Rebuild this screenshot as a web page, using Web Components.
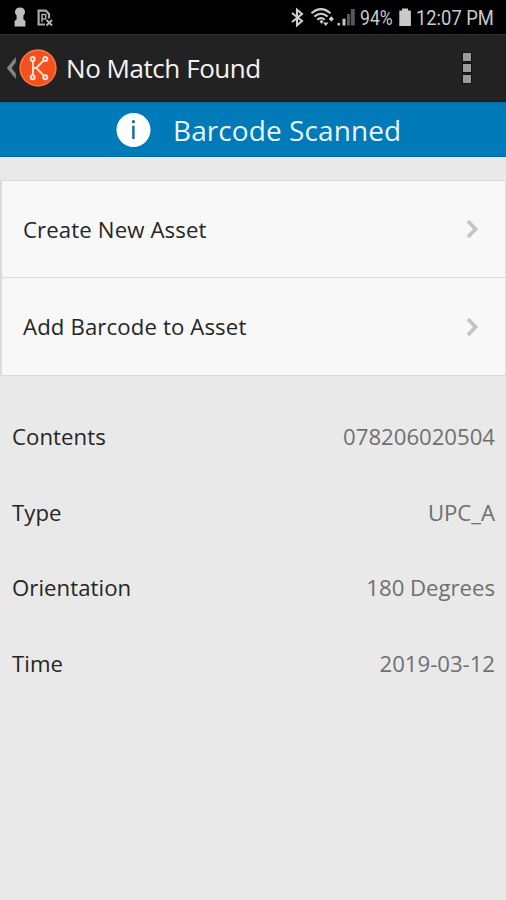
<!DOCTYPE html>
<html lang="en"><head><meta charset="utf-8"><title>No Match Found</title>
<style>
html,body{margin:0;height:900px;overflow:hidden;background:#e9e9e9;font-family:"Open Sans","Noto Sans",sans-serif}
</style></head><body>
<scan-screen></scan-screen>
<script>
function define(name, html){
  const t=document.createElement('template'); t.innerHTML=html;
  customElements.define(name, class extends HTMLElement{
    constructor(){super();this.attachShadow({mode:'open'}).append(t.content.cloneNode(true));}
  });
}
define('status-bar',`<style>
:host{display:flex;align-items:center;box-sizing:border-box;height:34px;background:#000;color:#c9c9c9;padding:0 12px 0 0;font:20.5px/34px Roboto,sans-serif}
svg{display:block;flex:none}
.left{margin-right:auto}
span{display:block;white-space:nowrap;transform-origin:0 50%;padding-top:2px}
.pct{width:33px;margin-left:-3px;transform:scaleX(.86)}
.time{width:78px;margin-left:1px;transform:scaleX(.895)}
</style>
<svg class="left" width="60" height="34" viewBox="0 0 60 34">
<path fill="#bdbdbd" d="M20 7.500c3.300 0 5 2 5 4.600 0 1.500-.7 2.700-1.600 3.500v3.600l2 1.800V26.500H14.600V21l2-1.800v-3.600c-.9-.8-1.600-2-1.600-3.500 0-2.600 1.700-4.600 5-4.600z"/>
<path fill="none" stroke="#a9a9a9" stroke-width="2.200" d="M45 24.500h-6.400V10.600h7.200l3.200 3.300v4.600"/>
<path fill="none" stroke="#a9a9a9" stroke-width="1.500" d="M42 22v-7.500h3.700v4.500h-3.500"/><path fill="none" stroke="#b9b9b9" stroke-width="1.800" d="M46.500 20l5.500 5.500M52 20l-5.500 5.500"/>
</svg>
<svg width="75" height="34" viewBox="287 0 75 34">
<path fill="none" stroke="#cfcfcf" stroke-width="2.100" d="M291 13l10 8-5 4.200V9.800l5 4.200-10 8"/>
<g fill="none" stroke="#cfcfcf" stroke-width="2"><path d="M310.500 13.300Q320 5 329.500 13.300M313.300 16.600Q320 10.800 326.700 16.600M316.200 19.800Q320 16.500 323.800 19.800"/></g>
<path fill="#cfcfcf" d="M318.500 21.300l2-1.300 2 1.300-2 2.700zM322 22.500h5.500l-2.700 3.500zM327.700 19l2.600-2.800 2.600 2.800-2.600 2.600z"/>
<path fill="#c5c5c5" d="M336.500 23h2.500v2.500h-2.500zM341.500 18.800h3v6.700h-3z"/><path fill="#565656" d="M346 14h3v11.500h-3zM349.800 9h4v16.500h-4z"/>
</svg>
<span class="pct">94%</span>
<svg width="22" height="34" viewBox="392 0 22 34"><path fill="#c9c9c9" d="M398.300 10.500h2.700V8.500h6v2h2.900v15.500h-11.600z"/></svg>
<span class="time">12:07 PM</span>`);
define('title-bar',`<style>
:host{display:flex;align-items:center;box-sizing:border-box;height:68px;background:#222;border-top:1px solid #333;border-bottom:1px solid #191b17;padding-left:6px;color:#f4f4f4;font-size:26px;line-height:66px}
svg{display:block;flex:none}
.t{margin-left:8px;flex:1;white-space:nowrap;letter-spacing:-.45px}
.more{display:grid;gap:3px;margin-right:35px}
.more i{width:8px;height:8px;background:#9c9c9c;box-shadow:0 0 0 1px #111}
</style>
<svg width="52" height="44" viewBox="6 46 52 44">
<path fill="#858585" d="M15.800 57v5.300L11.600 68l4.200 5.700V79L6.800 68z"/>
<circle cx="38" cy="68" r="18.500" fill="#f5511e"/><circle cx="38" cy="68" r="17.900" fill="none" stroke="#fa7d50" stroke-width="1.200"/>
<g fill="none" stroke="#ffe2d5" stroke-width="2"><path d="M33 61v14M43.800 60.400L36.300 68l7.500 7.600M33 68h3.500"/><circle cx="32.700" cy="58.900" r="2"/><circle cx="45.300" cy="58.900" r="2"/><circle cx="32.700" cy="77.200" r="2"/><circle cx="45.300" cy="77.200" r="2"/></g>
</svg><span class="t"><slot></slot></span><span class="more"><i></i><i></i><i></i></span>`);
define('info-banner',`<style>
:host{display:flex;align-items:center;box-sizing:border-box;height:55px;background:#007ab8;border-top:2px solid #0c6fa6;border-bottom:1px solid #006aa3;padding-left:116px;color:#e8f6fd;font-size:28px;line-height:52px;letter-spacing:.08px}
svg{display:block;flex:none;margin-right:22px}
span{white-space:nowrap}
</style><svg width="35" height="35" viewBox="0 0 35 35"><circle cx="17.500" cy="17" r="17" fill="#fff"/><path fill="#17699a" d="M16.200 12.700h2.400V26h-2.400z"/><circle cx="17.400" cy="8.700" r="1.600" fill="#17699a"/></svg><span><slot></slot></span>`);
define('action-list',`<style>:host{display:grid;grid-template-rows:96px 97px;gap:1px;background:#dadada;border:1px solid #dadada;border-left-width:2px;border-right-color:#e0e0e0;margin-top:23px;border-radius:2px}</style><slot></slot>`);
define('action-row',`<style>
:host{display:flex;align-items:center;justify-content:space-between;background:#f8f8f8;padding:0 26px 0 21px;color:#262626;font-size:22.200px;line-height:30px;letter-spacing:.12px}
svg{display:block}span{white-space:nowrap;padding-top:1px}
</style><span><slot></slot></span><svg width="12" height="20" viewBox="0 0 12 20"><path fill="none" stroke="#c4c4c4" stroke-width="3.800" d="M1 2l7.500 8L1 18"/></svg>`);
define('detail-list',`<style>:host{display:grid;grid-auto-rows:75.500px;margin-top:23.500px}</style><slot></slot>`);
define('detail-row',`<style>:host{display:flex;align-items:center;justify-content:space-between;padding:0 11px 0 12px;font-size:22.200px;line-height:30px;color:#262626;white-space:nowrap;letter-spacing:.05px}.v{color:#707070;letter-spacing:-.03px}</style><span><slot></slot></span><span class="v"><slot name="value"></slot></span>`);
define('scan-screen',`<style>:host{display:block;height:900px}</style>
<status-bar></status-bar><title-bar>No Match Found</title-bar><info-banner>Barcode Scanned</info-banner>
<action-list><action-row>Create New Asset</action-row><action-row>Add Barcode to Asset</action-row></action-list>
<detail-list>
<detail-row>Contents<span slot="value">078206020504</span></detail-row>
<detail-row>Type<span slot="value">UPC_A</span></detail-row>
<detail-row>Orientation<span slot="value">180 Degrees</span></detail-row>
<detail-row>Time<span slot="value">2019-03-12</span></detail-row>
</detail-list>`);
</script></body></html>
